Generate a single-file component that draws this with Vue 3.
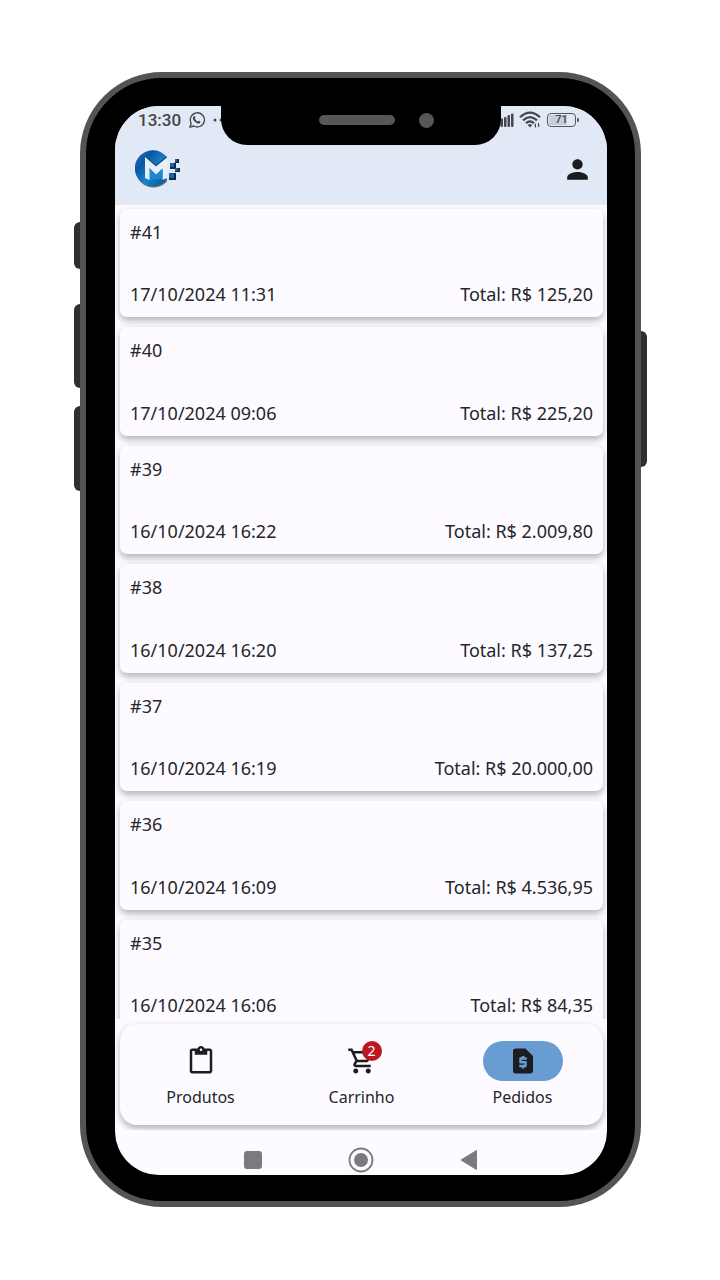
<script setup>
const orders = [
  { id: 41, date: '17/10/2024 11:31', total: '125,20' },
  { id: 40, date: '17/10/2024 09:06', total: '225,20' },
  { id: 39, date: '16/10/2024 16:22', total: '2.009,80' },
  { id: 38, date: '16/10/2024 16:20', total: '137,25' },
  { id: 37, date: '16/10/2024 16:19', total: '20.000,00' },
  { id: 36, date: '16/10/2024 16:09', total: '4.536,95' },
  { id: 35, date: '16/10/2024 16:06', total: '84,35' },
]
const tabs = [
  {
    label: 'Produtos',
    path: 'M19 2h-4.18C14.4.84 13.3 0 12 0c-1.3 0-2.4.84-2.82 2H5c-1.1 0-2 .9-2 2v16c0 1.1.9 2 2 2h14c1.1 0 2-.9 2-2V4c0-1.1-.9-2-2-2zm-7 0c.55 0 1 .45 1 1s-.45 1-1 1-1-.45-1-1 .45-1 1-1zm7 18H5V4h2v3h10V4h2v16z',
  },
  {
    label: 'Carrinho',
    badge: 2,
    path: 'M15.55 13c.75 0 1.41-.41 1.75-1.03l3.58-6.49A.996.996 0 0 0 20.01 4H5.21l-.94-2H1v2h2l3.6 7.59-1.35 2.44C4.52 15.37 5.48 17 7 17h12v-2H7l1.1-2h7.45zM6.16 6h12.15l-2.76 5H8.53L6.16 6zM7 18c-1.1 0-1.99.9-1.99 2S5.9 22 7 22s2-.9 2-2-.9-2-2-2zm10 0c-1.1 0-1.99.9-1.99 2s.89 2 1.99 2 2-.9 2-2-.9-2-2-2z',
  },
  {
    label: 'Pedidos',
    active: true,
    path: 'M14 2H6c-1.1 0-1.99.9-1.99 2L4 20c0 1.1.89 2 1.99 2H18c1.1 0 2-.9 2-2V8l-6-6zm1 9h-4v1h3c.55 0 1 .45 1 1v3c0 .55-.45 1-1 1h-1v1h-2v-1H9v-2h4v-1h-3c-.55 0-1-.45-1-1v-3c0-.55.45-1 1-1h1V8h2v1h2v2z',
  },
]
</script>

<template>
  <div class="page">
    <div class="phone">
      <i class="key mute"></i>
      <i class="key vol-up"></i>
      <i class="key vol-down"></i>
      <i class="key power"></i>

      <div class="screen">
        <div class="notch">
          <span class="speaker"></span>
          <span class="camera"></span>
        </div>

        <header>
          <div class="status">
            <span class="time">13:30</span>
            <svg class="whats" width="16" height="16" viewBox="0 0 24 24" fill="none" stroke="#44474d" stroke-width="2">
              <path d="M1.5 22.5l1.7-5.7A10.6 10.6 0 1 1 7.300 21z" />
              <path fill="#44474d" stroke="none" d="M7.600 6.200c.5-.3 1-.2 1.200.3l.9 2c.2.5-.9 1.500-.8 1.800.8 1.700 2.100 3 3.900 3.900.4.100 1.300-1.300 1.800-1.100l2.200 1.100c.6.300.2 1.600-.3 2.200-1 1-2.600 1.200-4.300.5-2.800-1.100-5-3.200-6.200-5.900-.8-1.900.2-3.900 1.600-4.800z" />
            </svg>
            <svg class="dots" width="16" height="4" viewBox="0 0 16 4" fill="#44474d">
              <circle cx="2" cy="2" r="1.500" /><circle cx="8" cy="2" r="1.500" /><circle cx="14" cy="2" r="1.500" />
            </svg>
            <svg class="signal" width="16" height="16" viewBox="0 0 16 16" fill="#44474d">
              <rect x="2.500" y="6.500" width="2.500" height="8.500" rx="1" />
              <rect x="6" y="5" width="2.500" height="10" rx="1" />
              <rect x="9.500" y="3" width="2.500" height="12" rx="1" />
              <rect x="13" y="1.500" width="2.500" height="13.500" rx="1" />
            </svg>
            <svg class="wifi" width="22" height="17" viewBox="0 0 22 17" fill="none" stroke="#44474d" stroke-width="2.200">
              <path d="M1 6.200Q11-3 21 6.200M4 9.400Q11 2.800 18 9.400M7 12.200Q11 8.400 15 12.200" />
              <path fill="#44474d" stroke="none" d="M8.800 14Q11 12 13.200 14L11 16.500zM15 14.500l2-2.500v4.500h-1V14.500zM21 14L19 16.500V12h1v2z" />
            </svg>
            <span class="battery"><span>71</span></span>
          </div>
          <div class="bar">
            <svg class="logo" width="46" height="40" viewBox="0 0 46 40" role="img" aria-label="M">
              <defs>
                <linearGradient id="disc" x1="0" y1="0" x2="1" y2="1">
                  <stop offset="0" stop-color="#1a72b8" />
                  <stop offset=".3" stop-color="#0b57a4" />
                  <stop offset=".6" stop-color="#1687cb" />
                  <stop offset="1" stop-color="#0b4c91" />
                </linearGradient>
              </defs>
              <path fill="#2c3e52" opacity=".7" d="M32 8.500A18 18 0 1 0 32 32.500V20L22 27.500z" />
              <path fill="url(#disc)" d="M31.500 7.500A18 18 0 1 0 30 32.500L31 30V9z" />
              <path fill="#21384f" opacity=".8" d="M9.500 6.500L21 16 31.500 7V9L21 18z" />
              <path fill="#e6f0fb" d="M10 8L21 17.500 32 8.500V29L27.500 31V19.500L21 25.500 14.500 19V31L10 29z" />
              <path fill="#1a8ace" d="M15 20.500L21 26.500 27.500 20.500V30H15z" />
              <g fill="#172942">
                <path d="M35 14h6v6h-6zM40 10h4v4h-4zM40 19h5v4h-5zM34 24h7v7h-7z" />
              </g>
              <g fill="#1764ae">
                <path d="M35 14h4v4h-4zM40 10h2v3h-2zM40 19h3v3h-3zM34 24h5v5h-5z" />
              </g>
            </svg>
            <button class="account" type="button" aria-label="Conta">
              <svg width="31" height="31" viewBox="0 0 24 24" fill="#1b1d20">
                <path d="M12 12c2.210 0 4-1.790 4-4s-1.790-4-4-4-4 1.790-4 4 1.790 4 4 4zm0 2c-2.670 0-8 1.340-8 4v2h16v-2c0-2.660-5.330-4-8-4z" />
              </svg>
            </button>
          </div>
        </header>

        <main>
          <article v-for="o in orders" :key="o.id" class="card">
            <div>#{{ o.id }}</div>
            <div class="row">
              <span>{{ o.date }}</span>
              <span>Total: R$ {{ o.total }}</span>
            </div>
          </article>
        </main>

        <div class="dock">
          <nav>
            <button v-for="t in tabs" :key="t.label" type="button" class="tab" :class="{ active: t.active }">
              <span class="pill">
                <svg width="30" height="30" viewBox="0 0 24 24" fill="#1b1d20"><path :d="t.path" /></svg>
                <span v-if="t.badge" class="badge">{{ t.badge }}</span>
              </span>
              <span class="label">{{ t.label }}</span>
            </button>
          </nav>
        </div>

        <footer>
          <button type="button" aria-label="Recentes">
            <svg width="18" height="18"><rect width="18" height="18" rx="3" fill="#7b7a7c" /></svg>
          </button>
          <button type="button" aria-label="Início">
            <svg width="26" height="26" viewBox="0 0 26 26">
              <circle cx="13" cy="13" r="11.500" fill="none" stroke="#7b7a7c" stroke-width="1.800" />
              <circle cx="13" cy="13" r="7" fill="#7b7a7c" />
            </svg>
          </button>
          <button type="button" aria-label="Voltar">
            <svg width="18" height="22" viewBox="0 0 18 22">
              <path d="M1 11L16.500 1.500v19z" fill="#7b7a7c" stroke="#7b7a7c" stroke-linejoin="round" />
            </svg>
          </button>
        </footer>
      </div>
    </div>
  </div>
</template>

<style>
body {
  background: #fff;
}
</style>

<style scoped>
.page {
  box-sizing: border-box;
  min-height: 100vh;
  padding: 72px 79px 73px 80px;
  display: flex;
  font-family: "Noto Sans", sans-serif;
  color: #25262a;
}
.phone {
  position: relative;
  flex: 1;
  display: flex;
  box-sizing: border-box;
  padding: 28px 28px 26px 29px;
  border: 6px solid #545454;
  border-radius: 82px;
  background: #000;
}
.key {
  position: absolute;
  width: 6px;
  background: #2f2f2f;
}
.mute,
.vol-up,
.vol-down {
  left: -12px;
  border-radius: 6px 0 0 6px;
}
.mute { top: 144px; height: 47px; }
.vol-up { top: 226px; height: 84px; }
.vol-down { top: 328px; height: 85px; }
.power {
  right: -12px;
  top: 253px;
  height: 136px;
  border-radius: 0 6px 6px 0;
}
.screen {
  position: relative;
  flex: 1;
  min-width: 0;
  display: flex;
  flex-direction: column;
  overflow: hidden;
  border-radius: 44px;
  background: #fdfbff;
}
.notch {
  position: absolute;
  z-index: 2;
  top: 0;
  left: 50%;
  transform: translateX(-50%);
  box-sizing: border-box;
  width: 280px;
  height: 39px;
  padding: 0 67px 11px 98px;
  display: flex;
  align-items: center;
  justify-content: space-between;
  border-radius: 0 0 26px 26px;
  background: #000;
}
.speaker {
  width: 76px;
  height: 10px;
  border-radius: 5px;
  background: #575757;
}
.camera {
  width: 15px;
  height: 15px;
  border-radius: 50%;
  background: #575757;
}
header {
  background: #e1e9f6;
}
.status {
  display: flex;
  align-items: center;
  height: 27px;
  padding: 0 28px 0 23px;
  font-family: Roboto, sans-serif;
  color: #44474d;
}
.time {
  font-size: 17px;
  font-weight: 500;
}
.whats { margin-left: 8px; }
.dots { margin-left: 8px; }
.signal { margin-left: auto; }
.wifi { margin: 0 6px 0 5px; }
.battery {
  position: relative;
  box-sizing: border-box;
  width: 29px;
  height: 14px;
  margin-right: 3px;
  padding: 1px;
  border: 1px solid #55585f;
  border-radius: 4px;
  font-size: 11px;
  font-weight: 500;
  line-height: 10px;
  text-align: center;
}
.battery span {
  display: block;
  border-radius: 2px;
  background: linear-gradient(90deg, #c9cdd8 71%, transparent 71%);
}
.battery::after {
  content: "";
  position: absolute;
  right: -4px;
  top: 4px;
  width: 2px;
  height: 4px;
  border-radius: 1px;
  background: #55585f;
}
.bar {
  display: flex;
  align-items: center;
  justify-content: space-between;
  height: 72px;
  padding: 0 14px 0 20px;
}
button {
  padding: 0;
  border: 0;
  background: none;
  font: inherit;
  color: inherit;
  display: flex;
  align-items: center;
  justify-content: center;
}
svg { display: block; }
main {
  flex: 1;
  display: flex;
  flex-direction: column;
  gap: 10px;
  padding: 4px 4px 0 5px;
  overflow: hidden;
}
.card {
  flex: 1 0 108px;
  box-sizing: border-box;
  padding: 11px 10px;
  display: flex;
  flex-direction: column;
  justify-content: space-between;
  border-radius: 7px;
  background: #fdfbff;
  box-shadow: 0 4px 6px rgba(0, 0, 0, 0.24), 0 1px 9px rgba(0, 0, 0, 0.06);
  font-size: 18px;
  line-height: 24px;
}
.card:last-child {
  margin-bottom: -9px;
}
.row {
  display: flex;
  justify-content: space-between;
}
.dock {
  position: relative;
  padding: 5px 4px 5px 5px;
  overflow: hidden;
  background: #fdfbff;
}
nav {
  display: grid;
  grid-template-columns: repeat(3, 1fr);
  padding: 17px 0 16px;
  border-radius: 17px;
  background: #fdfbff;
  box-shadow: 0 4px 6px rgba(0, 0, 0, 0.24), 0 1px 9px rgba(0, 0, 0, 0.06);
}
.tab {
  flex-direction: column;
  gap: 4px;
}
.pill {
  position: relative;
  width: 80px;
  height: 40px;
  display: flex;
  align-items: center;
  justify-content: center;
  border-radius: 20px;
}
.active .pill {
  background: #679dd3;
}
.badge {
  position: absolute;
  top: 0;
  right: 20px;
  width: 20px;
  height: 20px;
  border-radius: 50%;
  background: #ba1a1f;
  color: #fff;
  font-size: 14px;
  line-height: 20px;
  text-align: center;
}
.label {
  font-size: 16px;
  line-height: 24px;
}
footer {
  display: flex;
  align-items: center;
  justify-content: center;
  gap: 86px;
  height: 30px;
  padding-top: 15px;
}
</style>
